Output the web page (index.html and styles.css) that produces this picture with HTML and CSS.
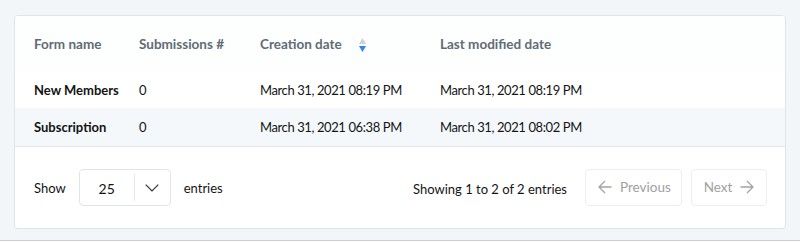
FILE: index.html
```html
<!DOCTYPE html>
<html>
<head>
<meta charset="utf-8">
<link rel="stylesheet" href="styles.css">
</head>
<body>
<div class="page">
  <div class="card">
    <table class="tbl">
      <thead>
        <tr>
          <th class="c1">Form name</th>
          <th class="c2">Submissions #</th>
          <th class="c3"><span class="sortable">Creation date<svg class="sort" width="7" height="14" viewBox="0 0 7 14"><path d="M3.5 0 L7 6 H0 Z" fill="#cdd2d8"/><path d="M3.5 14 L7 8 H0 Z" fill="#2f86f6"/></svg></span></th>
          <th class="c4">Last modified date</th>
        </tr>
      </thead>
      <tbody>
        <tr>
          <td class="name">New Members</td>
          <td>0</td>
          <td class="date">March 31, 2021 08:19 PM</td>
          <td class="date">March 31, 2021 08:19 PM</td>
        </tr>
        <tr class="alt">
          <td class="name">Subscription</td>
          <td>0</td>
          <td class="date">March 31, 2021 06:38 PM</td>
          <td class="date">March 31, 2021 08:02 PM</td>
        </tr>
      </tbody>
    </table>
    <div class="footer">
      <div class="length">
        <span>Show</span>
        <div class="select">
          <span class="val">25</span>
          <span class="sep"></span>
          <svg class="chev" width="14" height="8" viewBox="0 0 14 8"><path d="M0.7 0.7 L7 7 L13.3 0.7" fill="none" stroke="#333" stroke-width="1.2"/></svg>
        </div>
        <span>entries</span>
      </div>
      <div class="info">Showing 1 to 2 of 2 entries</div>
      <div class="pager">
        <button class="btn prev"><svg class="arr" width="14" height="14" viewBox="0 0 14 14"><path d="M13.5 7 H1 M7 1 L1 7 L7 13" fill="none" stroke="#a3a3a3" stroke-width="1.3"/></svg>Previous</button>
        <button class="btn next">Next<svg class="arr" width="14" height="14" viewBox="0 0 14 14"><path d="M0.5 7 H13 M7 1 L13 7 L7 13" fill="none" stroke="#a3a3a3" stroke-width="1.3"/></svg></button>
      </div>
    </div>
  </div>
</div>
</body>
</html>
```
FILE: styles.css
```css
html, body {
  margin: 0;
  padding: 0;
  background: #ffffff;
}
body {
  font-family: "Lato", "Liberation Sans", sans-serif;
  font-size: 13px;
  color: #141414;
}
.page {
  background: #f3f6f8;
  height: 241px;
  border-bottom: 1px solid #c9cdd1;
  padding: 15px 14px 0 14px;
  box-sizing: border-box;
}
.card {
  background: #fff;
  border: 1px solid #e0e4e8;
  border-radius: 4px;
  height: 214px;
  box-sizing: border-box;
  overflow: hidden;
}
.tbl {
  width: 100%;
  border-collapse: collapse;
}
.tbl th {
  text-align: left;
  font-weight: 700;
  font-size: 13.5px;
  color: #626b74;
  height: 56px;
  padding: 0;
  vertical-align: middle;
  background: #fdfefe;
}
.tbl td {
  padding: 0;
  height: 38px;
  vertical-align: middle;
}
.tbl tbody tr:first-child td {
  height: 36px;
}
.tbl .c1, .tbl td:nth-child(1) { padding-left: 19px; width: 105px; }
.tbl .c2 { width: 121px; }
.tbl .c3 { width: 180px; }
.tbl td.name { font-weight: 700; }
.tbl td.date { letter-spacing: -0.4px; }
.tbl tr.alt td { background: #f5f8fb; border-bottom: 1px solid #e3e7eb; }
.sortable {
  display: inline-flex;
  align-items: center;
  gap: 17px;
}
.sort { margin-top: 1px; }
.footer {
  display: flex;
  align-items: center;
  height: 81px;
  padding: 0 18px 0 19px;
}
.length {
  display: flex;
  align-items: center;
  gap: 13px;
}
.select {
  display: flex;
  align-items: center;
  width: 92px;
  height: 37px;
  box-sizing: border-box;
  border: 1px solid #e2e5e8;
  border-radius: 4px;
}
.val {
  width: 54px;
  text-align: center;
  font-size: 14px;
  padding-top: 2px;
}
.sep {
  width: 1px;
  height: 27px;
  background: #e6e8eb;
}
.chev {
  margin-left: 10px;
  margin-top: 1px;
}
.info {
  margin-left: auto;
  margin-right: 18px;
  padding-top: 3px;
}
.pager {
  display: flex;
  gap: 9px;
}
.btn {
  display: flex;
  align-items: center;
  gap: 8px;
  height: 37px;
  border: 1px solid #eceef0;
  border-radius: 4px;
  background: #fff;
  font-family: inherit;
  font-size: 13.5px;
  color: #a0a0a0;
  padding: 0 12px;
  padding-bottom: 2px;
}
.arr { flex: none; }
.prev { width: 97px; }
.next { width: 76px; justify-content: center; }
```
